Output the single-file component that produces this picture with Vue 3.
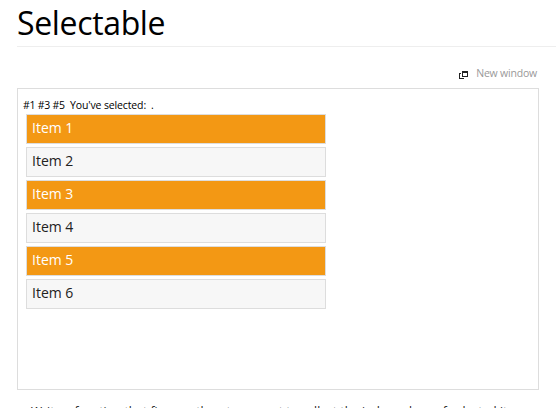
<script setup>
const items = [1, 2, 3, 4, 5, 6]
const selected = [1, 3, 5]
</script>

<template>
  <main class="page">
    <h1>Selectable</h1>
    <div class="toolbar">
      <svg class="icon" width="9" height="8" viewBox="0 0 9 8" shape-rendering="crispEdges">
        <path d="M3 0h6v6H3zM4 2v3h4V2z" fill="#222" fill-rule="evenodd" />
        <path d="M0 2h2v1H1v4h4v1H0z" fill="#222" />
      </svg>
      <a class="new-window">New window</a>
    </div>
    <section class="demo">
      <p class="feedback"><span class="result">#1 #3 #5</span><span class="label">You've selected:</span><span>.</span></p>
      <ol class="list">
        <li v-for="n in items" :key="n" :class="{ selected: selected.includes(n) }"><span>Item {{ n }}</span></li>
      </ol>
    </section>
    <p class="description"><span>Write a function that fires on the</span><code>stop</code><span>event to collect the index values of selected items.</span></p>
  </main>
</template>

<style>
html, body { margin: 0; background: #fff; overflow: hidden; }
</style>

<style scoped>
.page {
  box-sizing: border-box;
  height: 408px;
  padding-left: 17px;
  overflow: hidden;
  font-family: "Trebuchet MS", "Open Sans", sans-serif;
  color: #222;
}
h1 {
  box-sizing: border-box;
  height: 47px;
  margin: 0;
  border-bottom: 1px solid #eee;
  font-size: 32px;
  line-height: 45px;
  font-weight: 400;
  letter-spacing: -0.35px;
  color: #000;
}
.toolbar {
  box-sizing: border-box;
  width: 520px;
  height: 41px;
  padding-top: 18px;
  display: flex;
  align-items: flex-start;
  justify-content: flex-end;
  gap: 8px;
}
.icon { margin-top: 6px; }
.new-window { font-size: 10.5px; line-height: 16px; letter-spacing: -0.2px; color: #999; }
.demo {
  box-sizing: border-box;
  width: 522px;
  height: 302px;
  padding: 9px 5px;
  border: 1px solid #ddd;
}
.feedback {
  margin: 0;
  display: flex;
  height: 16px;
  line-height: 15px;
  font-size: 10.5px;
  letter-spacing: -0.13px;
  color: #000;
}
.result { width: 47px; white-space: nowrap; letter-spacing: -0.25px; }
.label { margin-right: 5px; }
.list {
  margin: 0;
  padding: 0 0 0 3px;
  list-style: none;
  display: grid;
  gap: 3px;
}
li {
  box-sizing: border-box;
  width: 300px;
  height: 30px;
  padding-left: 5px;
  border: 1px solid #ddd;
  background: #f7f7f7;
  font-size: 14px;
  line-height: 26px;
}
li.selected { background: #f39814; color: #fff; }
.description {
  display: flex;
  margin: 13px 0 0 14px;
  font-size: 12px;
  line-height: 18px;
  letter-spacing: 0.06px;
  white-space: nowrap;
}
code { font: inherit; margin: 0 6px; }
</style>
